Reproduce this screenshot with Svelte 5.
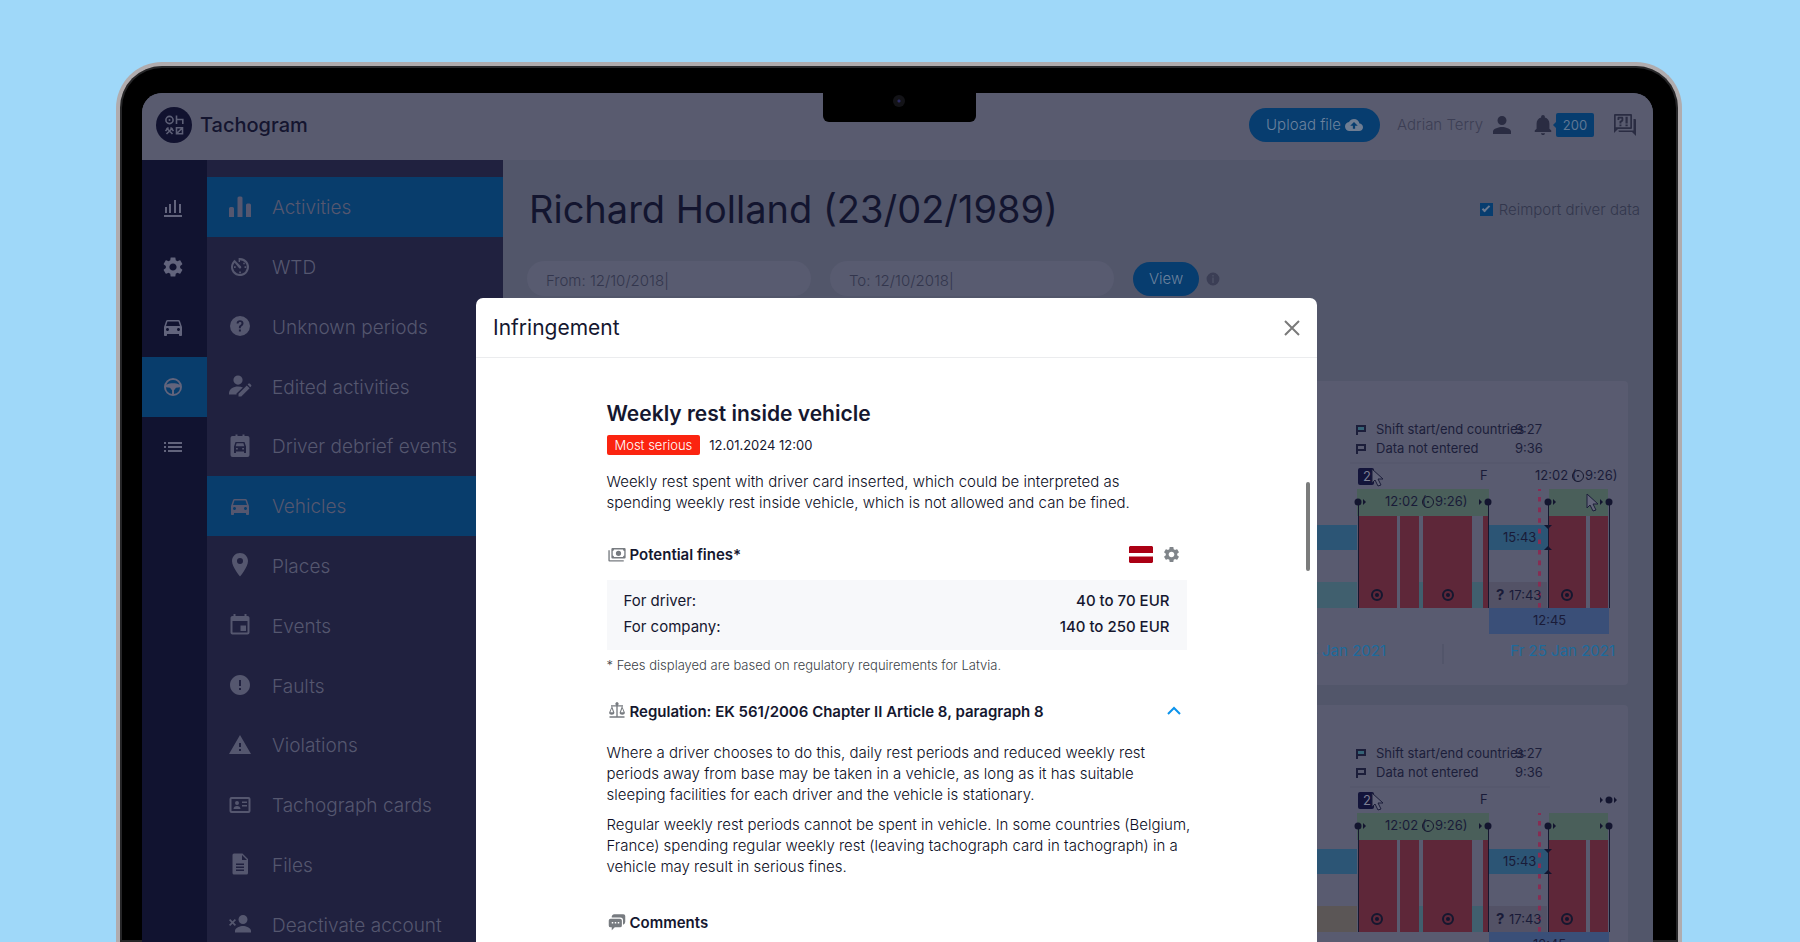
<script lang="ts">
	type IconName = keyof typeof icons;

	const icons = {
		stats: 'M4 12h2v6H4zM8 9h2v9H8zM13 5h2v13h-2zM18 9h2v9h-2zM3 20h18v2H3z',
		gear: 'M19.14 12.94c.04-.3.06-.61.06-.94 0-.32-.02-.64-.07-.94l2.03-1.58c.18-.14.23-.41.12-.61l-1.92-3.32c-.12-.22-.37-.29-.59-.22l-2.39.96c-.5-.38-1.03-.7-1.62-.94l-.36-2.54c-.04-.24-.24-.41-.48-.41h-3.84c-.24 0-.43.17-.47.41l-.36 2.54c-.59.24-1.13.57-1.62.94l-2.39-.96c-.22-.08-.47 0-.59.22L2.74 8.87c-.12.21-.08.47.12.61l2.03 1.58c-.05.3-.09.63-.09.94s.02.64.07.94l-2.03 1.58c-.18.14-.23.41-.12.61l1.92 3.32c.12.22.37.29.59.22l2.39-.96c.5.38 1.03.7 1.62.94l.36 2.54c.05.24.24.41.48.41h3.84c.24 0 .44-.17.47-.41l.36-2.54c.59-.24 1.13-.56 1.62-.94l2.39.96c.22.08.47 0 .59-.22l1.92-3.32c.12-.22.07-.47-.12-.61l-2.01-1.58zM12 15.6c-1.98 0-3.6-1.62-3.6-3.6s1.62-3.6 3.6-3.6 3.6 1.62 3.6 3.6-1.62 3.6-3.6 3.6z',
		car: 'M18.92 6.01C18.72 5.42 18.16 5 17.5 5h-11c-.66 0-1.21.42-1.42 1.01L3 12v8c0 .55.45 1 1 1h1c.55 0 1-.45 1-1v-1h12v1c0 .55.45 1 1 1h1c.55 0 1-.45 1-1v-8l-2.08-5.99zM6.5 16c-.83 0-1.5-.67-1.5-1.5S5.67 13 6.5 13s1.5.67 1.5 1.5S7.33 16 6.5 16zm11 0c-.83 0-1.5-.67-1.5-1.5s.67-1.5 1.5-1.5 1.5.67 1.5 1.5-.67 1.5-1.5 1.5zM5 11l1.5-4.5h11L19 11H5z',
		wheel: 'M12 3a9 9 0 1 0 0 18 9 9 0 0 0 0-18zM12 5a7 7 0 0 1 6.6 4.700C16.500 8.600 14.300 8.300 12 8.300S7.500 8.600 5.400 9.700A7 7 0 0 1 12 5zM5 12.200l4 .600 2 2.400v3.700A7 7 0 0 1 5 12.200zM13 18.900v-3.700l2-2.400 4-.600a7 7 0 0 1-6 6.700z',
		list: 'M3 13h2v-2H3v2zm0 4h2v-2H3v2zm0-8h2V7H3v2zm4 4h14v-2H7v2zm0 4h14v-2H7v2zM7 7v2h14V7H7z',
		bars: 'M1 13.500a1.500 1.500 0 0 1 1.500-1.500h2A1.500 1.500 0 0 1 6 13.500V22H1zM9.500 3a1.500 1.500 0 0 1 1.500-1.500h2A1.500 1.500 0 0 1 14.500 3v19h-5zM18 10a1.500 1.500 0 0 1 1.500-1.500h2A1.500 1.500 0 0 1 23 10v12h-5z',
		timer: 'M7.500 4.200A9 9 0 1 0 12 3v4h-1.400V3L12 3v2.200A6.900 6.900 0 1 1 6.600 7.700l4.300 5.300a1.300 1.300 0 0 0 2-1.700L6.500 4.800zM16.500 11.200h1.700v1.700h-1.700zM11.200 16.600h1.700v1.700h-1.700zM6 11.200h1.700v1.700H6zM15.300 7.700h1.500v1.500h-1.500z',
		question: 'M12 2a10 10 0 1 0 0 20 10 10 0 0 0 0-20zM10.900 15.500h2v2h-2zM12 6.300c-2 0-3.300 1.200-3.400 3.100h1.900c0-.900.600-1.500 1.500-1.500s1.500.500 1.500 1.300c0 .700-.400 1.100-1.200 1.700-1 .700-1.400 1.400-1.400 2.500v.800h1.900v-.6c0-.8.300-1.100 1.200-1.700 1-.7 1.500-1.500 1.500-2.700 0-1.700-1.400-2.900-3.500-2.900z',
		edit: 'M10 1.500a4.600 4.600 0 1 1 0 9.200 4.600 4.600 0 0 1 0-9.200zM1 19.500c0-4.500 4.500-7 9-7 1.800 0 3.500.4 4.900 1L8.500 19.500v1H1zM10.500 22.500v-2.800l8.300-8.300 2.800 2.800-8.300 8.300h-2.800zM19.600 10.600l1-1c.3-.3.9-.3 1.200 0l1.400 1.400c.3.300.3.900 0 1.200l-1 1z',
		debrief: 'M5 2h2.500V.500h2V2h5V.500h2V2H19.500a2 2 0 0 1 2 2v17a2 2 0 0 1-2 2h-15a2 2 0 0 1-2-2V4a2 2 0 0 1 2-2zM7.500 8L6 12.500V19h2v-1.500h8V19h2v-6.500L16.500 8zM8.600 9.300h6.800l.900 2.900H7.700zM8 14h1.800v1.500H8zM14.200 14H16v1.500h-1.800z',
		place: 'M12 0C7.600 0 4 3.500 4 8c0 6 8 15.500 8 15.500S20 14 20 8c0-4.500-3.600-8-8-8zm0 11a3 3 0 1 1 0-6 3 3 0 0 1 0 6z',
		event: 'M18 12.500h-5.500v5.500H18zM16.500 1v2h-9V1h-2v2H4.500c-1.100 0-2 .9-2 2v14.500c0 1.100.9 2 2 2h15c1.100 0 2-.9 2-2V5c0-1.100-.9-2-2-2h-1V1h-2zM19.500 19.500h-15V8h15v11.500z',
		fault: 'M12 2C6.480 2 2 6.480 2 12s4.480 10 10 10 10-4.480 10-10S17.520 2 12 2zm1 15h-2v-2h2v2zm0-4h-2V7h2v6z',
		warning: 'M1 21h22L12 2 1 21zm12-3h-2v-2h2v2zm0-4h-2v-4h2v4z',
		card: 'M3.500 4h17a2 2 0 0 1 2 2v12a2 2 0 0 1-2 2h-17a2 2 0 0 1-2-2V6a2 2 0 0 1 2-2zM3.500 6v12h17V6zM9 8a2 2 0 1 1 0 4 2 2 0 0 1 0-4zM5.500 16c0-2 1.500-3 3.500-3s3.500 1 3.500 3zM14 8.500h5V10h-5zM14 12h5v1.500h-5z',
		file: 'M6 1.500h8.500L20 7v14a1.500 1.500 0 0 1-1.500 1.500H6A1.500 1.500 0 0 1 4.500 21V3A1.500 1.500 0 0 1 6 1.500zM14 3v5h5zM8 11.500V13h8v-1.500zM8 14.500V16h8v-1.500zM8 17.500V19h8v-1.500z',
		deactivate: 'M15 3a4.500 4.500 0 1 1 0 9 4.500 4.500 0 0 1 0-9zM7 20.500v-1.800c0-3 5.300-4.700 8-4.700s8 1.700 8 4.700v1.800zM1 8.200L2.200 7l2.300 2.300L6.800 7 8 8.200l-2.300 2.300L8 12.800 6.800 14l-2.300-2.300L2.200 14 1 12.800l2.300-2.300z',
		upload: 'M19.350 10.040C18.670 6.590 15.640 4 12 4 9.110 4 6.600 5.640 5.350 8.040 2.340 8.360 0 10.910 0 14c0 3.310 2.690 6 6 6h13c2.760 0 5-2.240 5-5 0-2.640-2.050-4.780-4.650-4.960zM13.500 13v4h-3v-4H7l5-5 5 5z',
		person: 'M12 12c2.500 0 4.500-2 4.500-4.500S14.500 3 12 3 7.500 5 7.500 7.500 9.500 12 12 12zM3 21v-2.500c0-3 6-4.500 9-4.500s9 1.500 9 4.500V21z',
		bell: 'M12 23c1.200 0 2.200-.9 2.200-2H9.800c0 1.100 1 2 2.200 2zM19 16v-5.500c0-3.300-1.900-6-5-6.800V3c0-1.100-.9-2-2-2s-2 .9-2 2v.7C6.900 4.500 5 7.200 5 10.500V16l-2 2v1.500h18V18z',
		chat: 'M2 1h16a1 1 0 0 1 1 1v13a1 1 0 0 1-1 1H5l-4 4V2a1 1 0 0 1 1-1zM2.700 2.700v11.600h14.600V2.700zM20.500 6H22a1 1 0 0 1 1 1v16l-4-4H6.500a1 1 0 0 1-1-1v-.500h15zM4.500 7V5c0-.8.5-1.300 1.300-1.300H9c.8 0 1.300.5 1.300 1.300v2.300c0 .5-.2.9-.6 1.100l-1.300.9V10.500H6.500V8.300l2-1.200V5.500H6.300V7zM6.500 11.600h1.900v1.700H6.500zM12.500 3.700h2.200v6.800h-2.200zM12.500 11.600h2.200v1.700h-2.200z',
		info: 'M12 1a11 11 0 1 0 0 22 11 11 0 0 0 0-22zM11 5h2v2.500h-2zM11 9.500h2V19h-2z',
		money: 'M6 4h16a1.500 1.500 0 0 1 1.500 1.500v11A1.500 1.500 0 0 1 22 18H6a1.500 1.500 0 0 1-1.500-1.500v-11A1.500 1.500 0 0 1 6 4zM8 6c0 1-.7 2-1.700 2v6c1 0 1.700 1 1.700 2h12c0-1 .7-2 1.700-2V8c-1 0-1.700-1-1.700-2zM14 7.500a3.500 3.500 0 1 1 0 7 3.500 3.500 0 0 1 0-7zM.500 7h1.800v13.200H21V22H2A1.500 1.500 0 0 1 .500 20.500z',
		scales: 'M11.200 4.200a2 2 0 1 1 1.600 0H20V6h-1l3.500 8c0 1.800-1.500 3-3.500 3s-3.500-1.200-3.500-3L18.400 6h-5.500v13H22v2H2v-2h9.100V6H5.600l2.900 8c0 1.800-1.500 3-3.500 3s-3.500-1.200-3.500-3L5 6H4V4.200zM5 8.500L3.200 13.500h3.600zM19 8.500l-1.800 5h3.600z',
		comments: 'M8 1.500h12.500a2.500 2.500 0 0 1 2.500 2.500v8a4 4 0 0 1-3 3.500V9.500A3.500 3.500 0 0 0 16.500 6H5a4 4 0 0 1 3-4.500zM3.500 7.500H16a2.500 2.500 0 0 1 2.500 2.500v6.500A2.500 2.500 0 0 1 16 19H9l-4 4v-4H3.500A2.500 2.500 0 0 1 1 16.500V10a2.500 2.500 0 0 1 2.500-2.500zM5 12v2h2v-2zM9 12v2h2v-2zM13 12v2h2v-2z'
	};

	const rail: { icon: IconName; label: string; active?: boolean }[] = [
		{ icon: 'stats', label: 'Statistics' },
		{ icon: 'gear', label: 'Settings' },
		{ icon: 'car', label: 'Vehicles' },
		{ icon: 'wheel', label: 'Drivers', active: true },
		{ icon: 'list', label: 'Lists' }
	];

	const menu: { icon: IconName; label: string; active?: boolean }[] = [
		{ icon: 'bars', label: 'Activities', active: true },
		{ icon: 'timer', label: 'WTD' },
		{ icon: 'question', label: 'Unknown periods' },
		{ icon: 'edit', label: 'Edited activities' },
		{ icon: 'debrief', label: 'Driver debrief events' },
		{ icon: 'car', label: 'Vehicles', active: true },
		{ icon: 'place', label: 'Places' },
		{ icon: 'event', label: 'Events' },
		{ icon: 'fault', label: 'Faults' },
		{ icon: 'warning', label: 'Violations' },
		{ icon: 'card', label: 'Tachograph cards' },
		{ icon: 'file', label: 'Files' },
		{ icon: 'deactivate', label: 'Deactivate account' }
	];

	const charts = [
		{ rest: 'teal', pointer: true },
		{ rest: 'olive', pointer: false }
	];

	// x and width of each driving block
	const driving = [
		[48, 39],
		[90, 19],
		[113, 49],
		[173, 5],
		[239, 37],
		[280, 18]
	];
	const shiftEdges = [48, 178, 238, 299];

	let reimport = $state(true);
	let from = $state('From: 12/10/2018|');
	let to = $state('To: 12/10/2018|');
	let regulationOpen = $state(true);
	let modalOpen = $state(true);
</script>

{#snippet icon(name: IconName)}
	<svg class="icon" viewBox="0 0 24 24" aria-hidden="true">
		<path d={icons[name]} fill-rule="evenodd" />
	</svg>
{/snippet}

{#snippet target(x: number, y: number)}
	<circle cx={x} cy={y} r="5" class="ring" />
	<circle cx={x} cy={y} r="2" class="ink" />
{/snippet}

{#snippet smallTarget(x: number, y: number)}
	<circle cx={x} cy={y} r="5.5" class="ring thin" />
	<circle cx={x} cy={y} r="1" class="ink" />
{/snippet}

{#snippet pointer(x: number, y: number)}
	<path class="pointer" d="M{x} {y}v14l3-3 3 6 3-1-3-6h5z" />
{/snippet}

<div class="page">
	<div class="laptop">
		<div class="screen">
			<header class="topbar">
				<a class="brand" href="#home">
					<svg class="logo" viewBox="0 0 36 36" aria-hidden="true">
						<circle cx="18" cy="18" r="18" fill="#11122f" />
						<g fill="none" stroke="#5d5f76" stroke-width="1.600">
							<circle cx="13.500" cy="13" r="3.600" />
							<path d="M20.500 8.500v8.500M20.500 12.500h6.300v4.500M10.500 21l6 6M16.500 21l-6 6M9.500 24l3-3.500M17.500 24l-3-3.500" />
							<path d="M20.500 20.800h6v6h-6zM20.500 26.800l6-6" />
						</g>
						<circle cx="13.500" cy="13" r="1" fill="#5d5f76" />
					</svg>
					Tachogram
				</a>
				<div class="tools">
					<button class="pill upload">Upload file {@render icon('upload')}</button>
					<a class="user" href="#account">Adrian Terry {@render icon('person')}</a>
					<button class="bell" aria-label="Notifications">
						{@render icon('bell')}<span class="count">200</span>
					</button>
					<button class="help" aria-label="Help">{@render icon('chat')}</button>
				</div>
			</header>

			<div class="body">
				<nav class="rail" aria-label="Sections">
					{#each rail as item}
						<a href="#{item.icon}" class:active={item.active} aria-label={item.label}>
							{@render icon(item.icon)}
						</a>
					{/each}
				</nav>
				<nav class="menu" aria-label="Driver">
					{#each menu as item}
						<a href="#{item.icon}" class:active={item.active}>
							{@render icon(item.icon)}
							<span>{item.label}</span>
						</a>
					{/each}
				</nav>

				<main>
					<div class="heading">
						<h1>Richard Holland (23/02/1989)</h1>
						<label class="reimport">
							<input type="checkbox" bind:checked={reimport} />
							Reimport driver data
						</label>
					</div>
					<div class="filters">
						<input type="text" aria-label="From" bind:value={from} />
						<input type="text" aria-label="To" bind:value={to} />
						<div class="view">
							<button class="pill">View</button>
							{@render icon('info')}
						</div>
					</div>

					<div class="cards">
						{#each charts as chart}
							<section class="card">
								<dl class="legend">
									<svg class="flag {chart.rest}" viewBox="0 0 10 10" aria-hidden="true">
										<path d="M1 10V1h8v5H1" />
									</svg>
									<dt>Shift start/end countries</dt>
									<dd>9:27</dd>
									<svg class="flag" viewBox="0 0 10 10" aria-hidden="true">
										<path d="M1 10V1h8v5H1" />
									</svg>
									<dt>Data not entered</dt>
									<dd>9:36</dd>
								</dl>
								<svg class="chart" viewBox="0 0 318 227" role="img" aria-label="Driver activity">
									<path class="rule" d="M40 5h200" />
									<rect class="green" x="47" y="31" width="132" height="27" />
									<rect class="green" x="239" y="31" width="59" height="27" />
									<rect class="blue" x="0" y="67" width="47" height="25" />
									<rect class="blue" x="179" y="67" width="59" height="25" />
									<rect class={chart.rest} x="0" y="124" width="47" height="26" />
									<rect class="teal" x="109" y="124" width="4" height="26" />
									<rect class="teal" x="162" y="124" width="11" height="26" />
									<rect class="unknown" x="179" y="124" width="58" height="26" />
									<rect class="work" x="179" y="150" width="120" height="26" />
									{#each driving as [x, width]}
										<rect class="red" {x} y="58" {width} height="92" />
									{/each}
									<path class="now" d="M229.500 31v119" />
									{#each shiftEdges as x, i}
										<path class="edge" d="M{x} 44v106" />
										<circle class="ink" cx={x} cy="44" r="3.500" />
										<path class="ink" d={i % 2 ? `M${x - 9} 41l3 3-3 3z` : `M${x + 5} 41l3 3-3 3z`} />
									{/each}
									<path class="ink" d="M234 67h8l-4 4zM234 92h8l-4-4z" />

									<rect class="badge" x="48" y="10" width="16" height="17" rx="2" />
									<text class="badge-text" x="53" y="23">2</text>
									{@render pointer(62, 11)}
									<text x="170" y="22">F</text>
									{#if chart.pointer}
										<text x="225" y="22">12:02 (</text>
										{@render smallTarget(268, 18)}
										<text x="275" y="22">9:26)</text>
										{@render pointer(277, 36)}
									{:else}
										<circle class="ink" cx="299" cy="18" r="3.500" />
										<path class="ink" d="M290 15l3 3-3 3zM304 15l3 3-3 3z" />
									{/if}
									<text x="75" y="48">12:02 (</text>
									{@render smallTarget(118, 44)}
									<text x="125" y="48">9:26)</text>
									<text x="193" y="84">15:43</text>
									<text class="bold" x="186" y="142">?</text>
									<text x="199" y="142">17:43</text>
									<text x="223" y="167">12:45</text>
									{@render target(67, 137)}
									{@render target(138, 137)}
									{@render target(257, 137)}
									<text class="date" x="76" y="198" text-anchor="end">Th 24 Jan 2021</text>
									<path class="divider" d="M133 186v20" />
									<text class="date" x="305" y="198" text-anchor="end">Fr 25 Jan 2021</text>
								</svg>
							</section>
						{/each}
					</div>
				</main>
			</div>

			<div class="notch"><span></span></div>

			{#if modalOpen}
				<div class="overlay">
					<div class="modal" role="dialog" aria-labelledby="modal-title">
						<div class="modal-head">
							<h2 id="modal-title">Infringement</h2>
							<button class="close" aria-label="Close" onclick={() => (modalOpen = false)}>
								<svg viewBox="0 0 16 16" aria-hidden="true"><path d="M1 1l14 14M15 1L1 15" /></svg>
							</button>
						</div>
						<div class="modal-body">
							<h3>Weekly rest inside vehicle</h3>
							<div class="meta"><span class="severity">Most serious</span> 12.01.2024 12:00</div>
							<p class="summary">
								Weekly rest spent with driver card inserted, which could be interpreted as spending
								weekly rest inside vehicle, which is not allowed and can be fined.
							</p>

							<div class="section-head">
								{@render icon('money')}
								<h4>Potential fines*</h4>
								<svg class="latvia" viewBox="0 0 24 17" role="img" aria-label="Latvia">
									<path fill="#ab0014" d="M1 0h22l1 1v6H0V1zM0 10.500h24V16l-1 1H1l-1-1z" />
								</svg>
								<button class="settings" aria-label="Fine settings">{@render icon('gear')}</button>
							</div>
							<dl class="fines">
								<dt>For driver:</dt>
								<dd>40 to 70 EUR</dd>
								<dt>For company:</dt>
								<dd>140 to 250 EUR</dd>
							</dl>
							<p class="note">* Fees displayed are based on regulatory requirements for Latvia.</p>

							<div class="section-head">
								{@render icon('scales')}
								<h4>Regulation: EK 561/2006 Chapter II Article 8, paragraph 8</h4>
								<button
									class="toggle"
									aria-label="Toggle regulation"
									aria-expanded={regulationOpen}
									onclick={() => (regulationOpen = !regulationOpen)}
								>
									<svg viewBox="0 0 14 14" aria-hidden="true"><path d="M1 10l6-6 6 6" /></svg>
								</button>
							</div>
							{#if regulationOpen}
								<div class="regulation">
									<p>
										Where a driver chooses to do this, daily rest periods and reduced weekly rest
										periods away from base may be taken in a vehicle, as long as it has suitable
										sleeping facilities for each driver and the vehicle is stationary.
									</p>
									<p>
										Regular weekly rest periods cannot be spent in vehicle. In some countries
										(Belgium, France) spending regular weekly rest (leaving tachograph card in
										tachograph) in a vehicle may result in serious fines.
									</p>
								</div>
							{/if}

							<div class="section-head comments">
								{@render icon('comments')}
								<h4>Comments</h4>
							</div>
						</div>
						<div class="scrollbar"></div>
					</div>
				</div>
			{/if}
		</div>
	</div>
</div>

<style>
	:global(body) {
		background: #9fd8f9;
	}

	.page {
		box-sizing: border-box;
		height: 100vh;
		padding: 62px 118px 0 116px;
		overflow: hidden;
		background: #9fd8f9;
		font-family: Inter, 'Liberation Sans', sans-serif;
		font-size: 15px;
		color: #15172f;
	}

	.page *,
	.page *::after {
		box-sizing: border-box;
	}

	h1,
	h2,
	h3,
	h4,
	p,
	dl,
	dd {
		margin: 0;
		font-weight: 400;
	}

	a {
		color: inherit;
		text-decoration: none;
	}

	button,
	input {
		border: 0;
		padding: 0;
		background: none;
		font: inherit;
		color: inherit;
	}

	button {
		cursor: pointer;
	}

	.icon {
		width: 24px;
		height: 24px;
		flex: none;
		fill: currentColor;
	}

	.laptop {
		height: 100%;
		padding: 27px 25px 0 22px;
		border: 4px solid #b0acae;
		border-width: 4px 4px 0;
		border-radius: 46px 46px 0 0;
		background: #000;
		box-shadow: inset 0 0 0 2px #262628;
	}

	.screen {
		position: relative;
		height: 100%;
		overflow: hidden;
		border-radius: 20px 20px 0 0;
		background: #52566a;
	}

	.notch {
		position: absolute;
		top: 0;
		left: 50%;
		width: 153px;
		height: 29px;
		margin-left: -75px;
		padding-top: 2px;
		border-radius: 0 0 6px 6px;
		background: #000;
	}

	.notch span {
		display: block;
		width: 12px;
		height: 12px;
		margin: 0 auto;
		border-radius: 50%;
		background: radial-gradient(#2b2a63 0 1px, #131317 2px);
	}

	/* top bar */
	.topbar {
		display: flex;
		align-items: center;
		justify-content: space-between;
		height: 67px;
		padding: 0 16px 4px 14px;
		background: #595b6f;
	}

	.brand {
		display: flex;
		align-items: center;
		gap: 8px;
		font-size: 20px;
		font-weight: 500;
		color: #14152f;
	}

	.logo {
		width: 36px;
		height: 36px;
	}

	.tools,
	.user,
	.bell {
		display: flex;
		align-items: center;
	}

	.pill {
		height: 34px;
		padding: 0 17px;
		border-radius: 17px;
		background: #073d6f;
		font-weight: 300;
		color: #6c829d;
	}

	.upload {
		display: flex;
		align-items: center;
		gap: 4px;
	}

	.upload .icon {
		width: 18px;
		height: 18px;
		color: #6f7d92;
	}

	.user {
		gap: 7px;
		margin-left: 17px;
		font-weight: 300;
		color: #3c3e54;
	}

	.user .icon,
	.bell .icon,
	.help .icon {
		color: #2a2c42;
	}

	.bell {
		margin-left: 18px;
	}

	.bell .icon {
		width: 22px;
		height: 22px;
	}

	.count {
		position: relative;
		width: 38px;
		margin-left: 2px;
		border-radius: 2px;
		background: #073d6f;
		line-height: 24px;
		font-size: 13px;
		color: #5f7794;
	}

	.count::after {
		content: '';
		position: absolute;
		top: 9px;
		left: -3px;
		border: 3px solid transparent;
		border-left: 0;
		border-right-color: #073d6f;
	}

	.help {
		display: flex;
		margin-left: 19px;
	}

	/* side navigation */
	.body {
		display: flex;
	}

	.rail {
		width: 65px;
		flex: none;
		padding-top: 17px;
		background: #111330;
		color: #62647c;
	}

	.rail a {
		display: flex;
		align-items: center;
		justify-content: center;
		height: 60px;
		padding-right: 3px;
	}

	.menu {
		display: grid;
		grid-auto-rows: 1fr;
		width: 296px;
		height: 794px;
		flex: none;
		padding-top: 17px;
		background: #20213f;
		font-size: 19px;
		font-weight: 300;
		color: #55576f;
	}

	.menu a {
		display: flex;
		align-items: center;
		gap: 20px;
		padding-left: 21px;
	}

	.menu span {
		padding-top: 2px;
	}

	.rail .active,
	.menu .active {
		background: #083d6c;
	}

	/* content */
	main {
		flex: 1;
		min-width: 0;
	}

	.heading {
		display: flex;
		align-items: center;
		justify-content: space-between;
		padding: 25px 13px 0 26px;
	}

	h1 {
		line-height: 48px;
		font-size: 38px;
		color: #13152f;
	}

	.reimport {
		display: flex;
		align-items: center;
		gap: 6px;
		font-weight: 300;
		color: #33374d;
	}

	.reimport input {
		display: grid;
		place-items: center;
		width: 13px;
		height: 13px;
		margin: 0;
		appearance: none;
		background: #073d6f;
	}

	.reimport input:checked::after {
		content: '';
		width: 8px;
		height: 4px;
		margin-bottom: 3px;
		border: solid #6c7a90;
		border-width: 0 0 2px 2px;
		transform: rotate(-45deg);
	}

	.filters {
		display: flex;
		gap: 19px;
		margin-top: 28px;
		padding-left: 24px;
	}

	.filters > input {
		width: 284px;
		height: 35px;
		padding: 4px 19px 0;
		border-radius: 17px;
		background: #585b70;
		font-weight: 300;
		color: #33364d;
	}

	.view {
		display: flex;
		align-items: center;
		gap: 7px;
	}

	.view .pill {
		padding: 0 16px;
	}

	.view .icon {
		width: 14px;
		height: 14px;
		color: #3b3e55;
	}

	.cards {
		display: flex;
		flex-direction: column;
		gap: 20px;
		margin-top: 85px;
		padding: 0 25px 0 24px;
	}

	.card {
		display: flex;
		flex-direction: column;
		align-items: flex-end;
		padding-top: 39px;
		border-radius: 4px;
		background: #595b70;
	}

	.legend {
		display: grid;
		grid-template-columns: 20px 139px 113px;
		align-items: center;
		line-height: 19px;
		font-size: 13px;
		color: #1c1e3a;
	}

	.legend dt {
		white-space: nowrap;
	}

	.flag {
		width: 10px;
		height: 10px;
		fill: none;
		stroke: #1c1e3a;
		stroke-width: 2;
	}

	.legend .flag.teal,
	.legend .flag.olive {
		fill: #356376;
	}

	.chart {
		width: 318px;
		height: 227px;
		font-size: 13px;
		fill: #191b38;
	}

	.ink {
		fill: #13152f;
	}

	.ring {
		fill: none;
		stroke: #15172f;
		stroke-width: 2;
	}

	.thin {
		stroke-width: 1;
	}

	.edge {
		stroke: #15172f;
		stroke-width: 1;
		shape-rendering: crispEdges;
	}

	.rule {
		stroke: #55576b;
	}

	.divider {
		stroke: #4d5065;
	}

	.now {
		fill: none;
		stroke: #862d53;
		stroke-width: 3;
		stroke-dasharray: 4.6 6;
		stroke-dashoffset: 2.6;
	}

	.green {
		fill: #4a5f5a;
	}

	.blue {
		fill: #2c5575;
	}

	.chart .teal {
		fill: #405f6e;
	}

	.chart .olive {
		fill: #5b5656;
	}

	.unknown {
		fill: #535266;
	}

	.work {
		fill: #3a4f78;
	}

	.red {
		fill: #5e2739;
	}

	.badge {
		fill: #13143a;
	}

	.badge-text {
		fill: #7c7e93;
	}

	.pointer {
		fill: #63657a;
		stroke: #1c1e3a;
	}

	.bold {
		font-size: 15px;
		font-weight: 700;
	}

	.date {
		font-size: 15px;
		fill: #1d6a9c;
	}

	/* infringement dialog */
	.overlay {
		position: absolute;
		inset: 0;
		display: flex;
		justify-content: center;
		padding: 205px 2px 0 0;
	}

	.modal {
		position: relative;
		width: 841px;
		overflow: hidden;
		border-radius: 7px 7px 0 0;
		background: #fff;
	}

	.modal-head {
		display: flex;
		align-items: center;
		justify-content: space-between;
		height: 60px;
		padding: 0 17px;
		border-bottom: 1px solid #ebecee;
	}

	h2 {
		font-size: 21px;
	}

	.close,
	.toggle,
	.settings {
		display: flex;
	}

	.close svg {
		width: 16px;
		height: 16px;
		stroke: #7a7a7a;
		stroke-width: 2;
	}

	.modal-body {
		width: 580px;
		margin: 0 auto;
		padding-top: 42px;
		line-height: 21px;
	}

	h3 {
		line-height: 28px;
		font-size: 21px;
		font-weight: 600;
	}

	.meta {
		display: flex;
		gap: 9px;
		margin-top: 7px;
		line-height: 20px;
		font-size: 13px;
	}

	.severity {
		padding: 0 8px;
		border-radius: 2px;
		background: #fb2410;
		font-weight: 300;
		color: #fff;
	}

	.modal-body p {
		font-weight: 300;
		color: #0c0e24;
	}

	.modal-body .summary {
		margin-top: 16px;
	}

	.section-head {
		display: flex;
		align-items: center;
		height: 24px;
		margin-top: 29px;
	}

	.section-head > .icon {
		width: 18px;
		height: 18px;
		margin: 0 4px 0 1px;
		color: #777b80;
	}

	h4 {
		flex: 1;
		font-weight: 600;
	}

	.latvia {
		width: 24px;
		height: 17px;
	}

	.settings {
		margin: 0 6px 0 9px;
		color: #80858a;
	}

	.settings .icon {
		width: 19px;
		height: 19px;
	}

	.fines {
		display: grid;
		grid-template-columns: 1fr auto;
		margin-top: 14px;
		padding: 8px 17px 10px;
		background: #f7f8fa;
		line-height: 26px;
	}

	.fines dd {
		text-align: right;
		font-weight: 500;
	}

	.modal-body .note {
		margin-top: 5px;
		font-size: 13px;
		color: #3c3f47;
	}

	.note + .section-head {
		margin-top: 23px;
	}

	.toggle {
		margin-right: 6px;
	}

	.toggle svg {
		width: 14px;
		height: 14px;
		fill: none;
		stroke: #0b93ec;
		stroke-width: 2;
	}

	.regulation {
		display: grid;
		gap: 9px;
		margin: 19px -8px 0 0;
	}

	.comments {
		margin-top: 33px;
	}

	.scrollbar {
		position: absolute;
		top: 184px;
		right: 7px;
		width: 4px;
		height: 89px;
		border-radius: 2px;
		background: #7b7c7c;
	}
</style>
